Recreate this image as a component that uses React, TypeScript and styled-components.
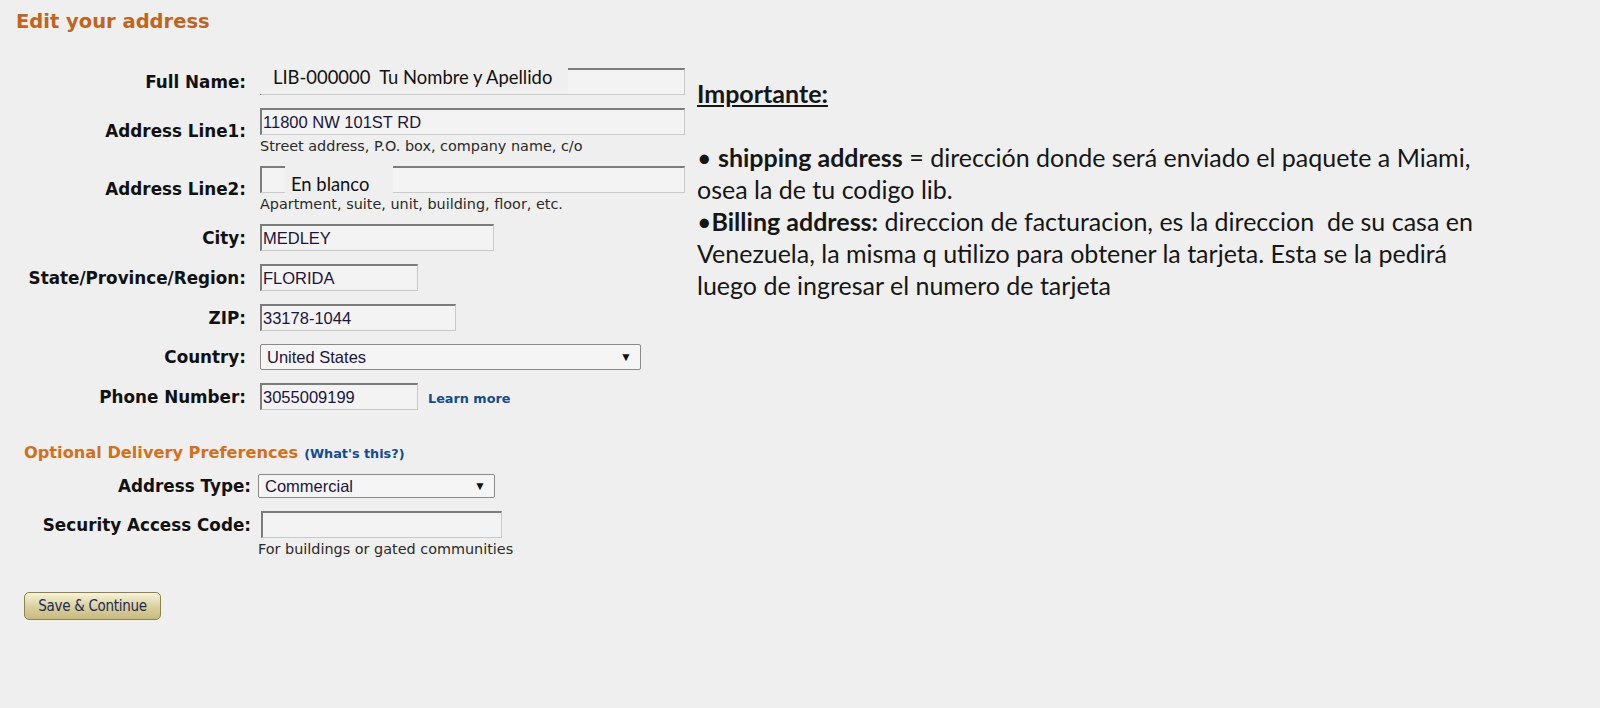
import React from 'react'
import styled, { createGlobalStyle } from 'styled-components'

const GlobalStyle = createGlobalStyle`
  html, body {
    margin: 0;
    padding: 0;
    background: #efefef;
  }
`

const Page = styled.div`
  min-height: 708px;
  background: #efefef;
  font-family: "DejaVu Sans", Verdana, sans-serif;
  color: #111;
  overflow: hidden;
`

const Title = styled.h1`
  margin: 0;
  padding: 10px 0 0 16px;
  height: 68px;
  box-sizing: border-box;
  font-size: 19.5px;
  line-height: 23px;
  font-weight: bold;
  color: #c0641e;
`

const Columns = styled.div`
  display: flex;
  align-items: flex-start;
`

const FormCol = styled.div`
  width: 690px;
  flex: none;
`

const FieldGrid = styled.div<{ $labelWidth: number; $gap: number }>`
  display: grid;
  grid-template-columns: ${p => p.$labelWidth}px 1fr;
  column-gap: ${p => p.$gap}px;
  row-gap: 13px;
  align-items: center;
`

const Label = styled.div<{ $top?: boolean }>`
  text-align: right;
  font-weight: bold;
  font-size: 16.8px;
  line-height: 20px;
  white-space: nowrap;
  ${p => p.$top && `
    align-self: start;
    padding-top: 4px;
  `}
`

const FieldCell = styled.div`
  position: relative;
  display: flex;
  flex-direction: column;
  align-items: flex-start;
`

const TextBox = styled.div<{ $w: number; $shift?: number }>`
  width: ${p => p.$w}px;
  height: 27px;
  margin-left: ${p => p.$shift || 0}px;
  box-sizing: border-box;
  border-top: 2px solid #7c7c7c;
  border-left: 2px solid #7c7c7c;
  border-right: 1px solid #c9c9c9;
  border-bottom: 1px solid #c9c9c9;
  background: #f3f3f3;
  padding: 0 1px;
  display: flex;
  align-items: center;
  font-family: "Liberation Sans", Arial, sans-serif;
  font-size: 16.5px;
  color: #1d1440;
`

const SelectBox = styled.div<{ $w: number; $h: number }>`
  width: ${p => p.$w}px;
  height: ${p => p.$h}px;
  box-sizing: border-box;
  border: 1px solid #8a8a8a;
  border-radius: 2px;
  background: #f5f5f5;
  padding: 0 8px 0 6px;
  display: flex;
  align-items: center;
  justify-content: space-between;
  font-family: "Liberation Sans", Arial, sans-serif;
  font-size: 16.5px;
  color: #1d1440;
`

const Arrow = styled.span`
  font-size: 12px;
  color: #111;
`

const Hint = styled.div`
  margin-top: 4px;
  font-size: 14.4px;
  line-height: 14px;
  color: #2a2a2a;
  white-space: nowrap;
`

const Inline = styled.div`
  display: flex;
  align-items: center;
  gap: 10px;
`

const Link = styled.a`
  font-size: 12.8px;
  font-weight: bold;
  color: #124c8f;
  text-decoration: none;
  padding-top: 4px;
`

const Annotation = styled.div<{ $left: number; $top: number; $w: number; $h: number; $pad: number }>`
  position: absolute;
  left: ${p => p.$left}px;
  top: ${p => p.$top}px;
  width: ${p => p.$w}px;
  height: ${p => p.$h}px;
  padding: ${p => p.$pad}px 0 0 ${p => p.$left < 0 ? 17 : 6}px;
  background: #efefef;
  display: flex;
  align-items: center;
  box-sizing: border-box;
  font-family: Lato, "Open Sans", sans-serif;
  font-size: 18.4px;
  color: #111;
  white-space: pre;
`

const SectionTitle = styled.div`
  margin: 33px 0 10px 24px;
  font-size: 16.2px;
  line-height: 20px;
  font-weight: bold;
  color: #d2701c;
`

const SectionLink = styled.span`
  font-size: 12.8px;
  font-weight: bold;
  color: #124c8f;
  margin-left: 6px;
`

const SaveButton = styled.button`
  margin: 36px 0 0 24px;
  width: 137px;
  height: 28px;
  border: 1px solid #8d8152;
  border-radius: 5px;
  background: linear-gradient(#f7f3d6, #d9cf9c 55%, #c8bb80);
  font-family: "Liberation Sans Narrow", "DejaVu Sans Condensed", sans-serif;
  font-size: 15px;
  letter-spacing: -0.3px;
  color: #1d2a5e;
  padding: 0;
`

const Notes = styled.div`
  padding: 9px 0 0 7px;
  font-family: Lato, "Open Sans", sans-serif;
  font-size: 25px;
  line-height: 32px;
  color: #161616;
  white-space: nowrap;
`

const NoteHead = styled.div`
  font-weight: bold;
  text-decoration: underline;
  margin-bottom: 32px;
`

const NoteLine = styled.div``

const topRows = [
  { label: 'City:', value: 'MEDLEY', w: 234 },
  { label: 'State/Province/Region:', value: 'FLORIDA', w: 158 },
  { label: 'ZIP:', value: '33178-1044', w: 196 },
]

export default function App() {
  return (
    <Page>
      <GlobalStyle />
      <Title>Edit your address</Title>
      <Columns>
        <FormCol>
          <FieldGrid $labelWidth={246} $gap={14}>
            <Label>Full Name:</Label>
            <FieldCell>
              <TextBox $w={425} />
              <Annotation $left={-4} $top={-8} $w={312} $h={34} $pad={0}>
                {'LIB-000000  Tu Nombre y Apellido'}
              </Annotation>
            </FieldCell>

            <Label>Address Line1:</Label>
            <FieldCell>
              <TextBox $w={425}>11800 NW 101ST RD</TextBox>
              <Hint>Street address, P.O. box, company name, c/o</Hint>
            </FieldCell>

            <Label>Address Line2:</Label>
            <FieldCell>
              <TextBox $w={425} />
              <Annotation $left={25} $top={-4} $w={108} $h={34} $pad={10}>
                En blanco
              </Annotation>
              <Hint>Apartment, suite, unit, building, floor, etc.</Hint>
            </FieldCell>

            {topRows.map(r => (
              <React.Fragment key={r.label}>
                <Label>{r.label}</Label>
                <FieldCell>
                  <TextBox $w={r.w}>{r.value}</TextBox>
                </FieldCell>
              </React.Fragment>
            ))}

            <Label>Country:</Label>
            <FieldCell>
              <SelectBox $w={381} $h={26}>
                United States <Arrow>▼</Arrow>
              </SelectBox>
            </FieldCell>

            <Label>Phone Number:</Label>
            <FieldCell>
              <Inline>
                <TextBox $w={158}>3055009199</TextBox>
                <Link href="#">Learn more</Link>
              </Inline>
            </FieldCell>
          </FieldGrid>

          <SectionTitle>
            Optional Delivery Preferences<SectionLink>(What's this?)</SectionLink>
          </SectionTitle>

          <FieldGrid $labelWidth={251} $gap={7}>
            <Label>Address Type:</Label>
            <FieldCell>
              <SelectBox $w={237} $h={24}>
                Commercial <Arrow>▼</Arrow>
              </SelectBox>
            </FieldCell>

            <Label $top>Security Access Code:</Label>
            <FieldCell>
              <TextBox $w={241} $shift={3} />
              <Hint>For buildings or gated communities</Hint>
            </FieldCell>
          </FieldGrid>

          <SaveButton>Save &amp; Continue</SaveButton>
        </FormCol>

        <Notes>
          <NoteHead>Importante:</NoteHead>
          <NoteLine>
            • <b>shipping address</b> = dirección donde será enviado el paquete a Miami,
          </NoteLine>
          <NoteLine>osea la de tu codigo lib.</NoteLine>
          <NoteLine>
            •<b>Billing address:</b> direccion de facturacion, es la direccion&nbsp; de su casa en
          </NoteLine>
          <NoteLine>Venezuela, la misma q utilizo para obtener la tarjeta. Esta se la pedirá</NoteLine>
          <NoteLine>luego de ingresar el numero de tarjeta</NoteLine>
        </Notes>
      </Columns>
    </Page>
  )
}
